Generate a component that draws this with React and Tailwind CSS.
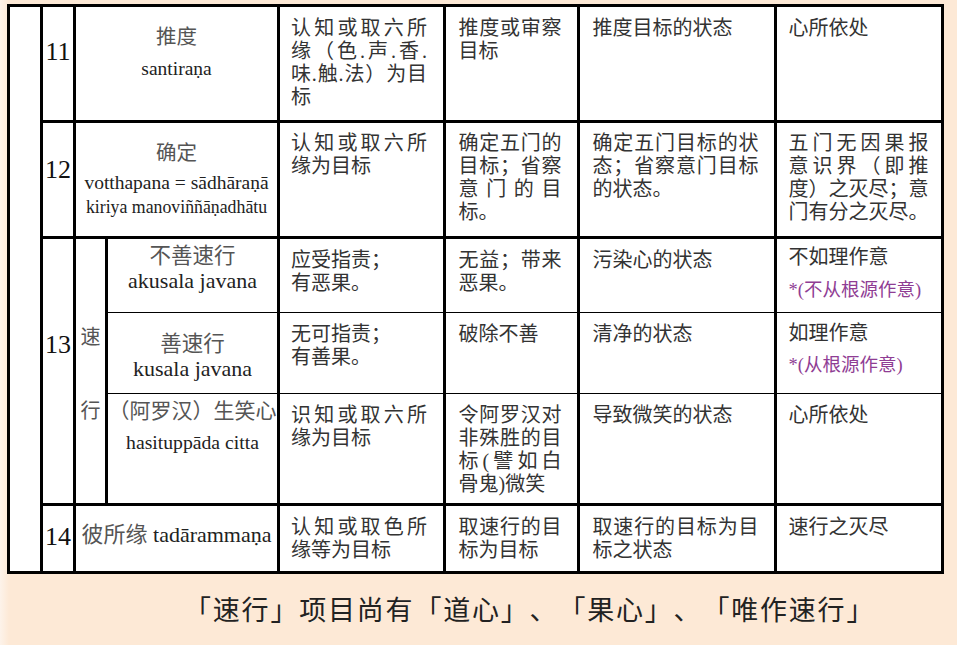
import React from 'react';

const serif = "font-['Liberation_Serif','Noto_Sans_CJK_SC',serif]";

// a line that is stretched to the full cell width (like the justified source)
const J = ({ children }) => (
  <div className="text-justify [text-align-last:justify]">{children}</div>
);
const L = ({ children }) => <div>{children}</div>;

const thick = 'border-[3px] border-black';
const dataCls = 'align-top bg-white text-[20px] leading-[23px] text-[#333]';

const c1 = 'pl-[11px] pr-[16px]';
const c2 = 'pl-[12.5px] pr-[15.5px]';
const c3 = 'pl-[12.5px] pr-[15.5px]';
const c4 = 'pl-[11.5px] pr-[12.5px]';

const Purple = ({ children, mt }) => (
  <div className={`text-[18.5px] leading-[23px] text-[#8f3d94] ${mt}`}>{children}</div>
);

const App = () => {
  return (
    <div className={`min-h-screen bg-[linear-gradient(to_right,#fdf3ea_0px,#fde9d6_9px)] pt-[4px] [text-spacing-trim:space-all] ${serif}`}>
      <table className="ml-[7px] w-[937px] table-fixed border-collapse">
        <colgroup>
          <col className="w-[33px]" />
          <col className="w-[33px]" />
          <col className="w-[32px]" />
          <col className="w-[172px]" />
          <col className="w-[166px]" />
          <col className="w-[134px]" />
          <col className="w-[197px]" />
          <col className="w-[167px]" />
        </colgroup>
        <tbody>
          {/* 11 */}
          <tr className="h-[116px]">
            <td rowSpan={6} className={`${thick} bg-white`}></td>
            <td className={`${thick} bg-white align-top pt-[30px] text-center text-[26px] leading-[30px] text-[#111]`}>11</td>
            <td colSpan={2} className={`${thick} bg-white align-top pt-[13px] text-center`}>
              <div className="text-[20.5px] leading-[34px] text-[#555]">推度</div>
              <div className="mt-[2px] text-[19.5px] leading-[26px] text-[#222]">santiraṇa</div>
            </td>
            <td className={`${thick} ${dataCls} ${c1} pt-[9.5px]`}>
              <J>认知或取六所</J>
              <J>缘（色.声.香.</J>
              <J>味.触.法）为目</J>
              <L>标</L>
            </td>
            <td className={`${thick} ${dataCls} ${c2} pt-[9.5px]`}>
              <J>推度或审察</J>
              <L>目标</L>
            </td>
            <td className={`${thick} ${dataCls} ${c3} pt-[9.5px]`}>
              <L>推度目标的状态</L>
            </td>
            <td className={`${thick} ${dataCls} ${c4} pt-[9.5px]`}>
              <L>心所依处</L>
            </td>
          </tr>

          {/* 12 */}
          <tr className="h-[116px]">
            <td className={`${thick} bg-white align-top pt-[31.5px] text-center text-[26px] leading-[30px] text-[#111]`}>12</td>
            <td colSpan={2} className={`${thick} bg-white align-top pt-[12.5px] text-center`}>
              <div className="text-[20.5px] leading-[34px] text-[#555]">确定</div>
              <div className="text-[19.5px] leading-[25px] text-[#222]">votthapana = sādhāraṇā</div>
              <div className="text-[17.8px] leading-[25px] text-[#222]">kiriya manoviññāṇadhātu</div>
            </td>
            <td className={`${thick} ${dataCls} ${c1} pt-[9px]`}>
              <J>认知或取六所</J>
              <L>缘为目标</L>
            </td>
            <td className={`${thick} ${dataCls} ${c2} pt-[9px]`}>
              <J>确定五门的</J>
              <J>目标；省察</J>
              <J>意门的目</J>
              <L>标。</L>
            </td>
            <td className={`${thick} ${dataCls} ${c3} pt-[9px]`}>
              <J>确定五门目标的状</J>
              <J>态；省察意门目标</J>
              <L>的状态。</L>
            </td>
            <td className={`${thick} ${dataCls} ${c4} pt-[9px]`}>
              <J>五门无因果报</J>
              <J>意识界（即推</J>
              <J>度）之灭尽；意</J>
              <J>门有分之灭尽。</J>
            </td>
          </tr>

          {/* 13 – akusala */}
          <tr className="h-[75px]">
            <td rowSpan={3} className={`${thick} bg-white align-top pt-[90.5px] text-center text-[26px] leading-[30px] text-[#111]`}>13</td>
            <td rowSpan={3} className={`${thick} bg-white align-top pt-[85.5px] text-center text-[20px] leading-[24px] text-[#555]`}>
              <div>速</div>
              <div className="mt-[50px]">行</div>
            </td>
            <td className={`${thick} border-b-[1px] bg-white align-top pt-[3.5px] text-center`}>
              <div className="text-[21.5px] leading-[26px] text-[#555]">不善速行</div>
              <div className="text-[22px] leading-[24px] text-[#222]">akusala javana</div>
            </td>
            <td className={`${thick} border-b-[1px] ${dataCls} ${c1} pt-[10px]`}>
              <L>应受指责；</L>
              <L>有恶果。</L>
            </td>
            <td className={`${thick} border-b-[1px] ${dataCls} ${c2} pt-[10px]`}>
              <J>无益；带来</J>
              <L>恶果。</L>
            </td>
            <td className={`${thick} border-b-[1px] ${dataCls} ${c3} pt-[10px]`}>
              <L>污染心的状态</L>
            </td>
            <td className={`${thick} border-b-[1px] ${dataCls} ${c4} pt-[7px]`}>
              <L>不如理作意</L>
              <Purple mt="mt-[10px]">*(不从根源作意)</Purple>
            </td>
          </tr>

          {/* 13 – kusala */}
          <tr className="h-[81px]">
            <td className={`${thick} border-y-[1px] bg-white align-top pt-[17.5px] text-center`}>
              <div className="text-[21.5px] leading-[26px] text-[#555]">善速行</div>
              <div className="text-[22px] leading-[24px] text-[#222]">kusala javana</div>
            </td>
            <td className={`${thick} border-y-[1px] ${dataCls} ${c1} pt-[9.5px]`}>
              <L>无可指责；</L>
              <L>有善果。</L>
            </td>
            <td className={`${thick} border-y-[1px] ${dataCls} ${c2} pt-[9.5px]`}>
              <L>破除不善</L>
            </td>
            <td className={`${thick} border-y-[1px] ${dataCls} ${c3} pt-[9.5px]`}>
              <L>清净的状态</L>
            </td>
            <td className={`${thick} border-y-[1px] ${dataCls} ${c4} pt-[9px]`}>
              <L>如理作意</L>
              <Purple mt="mt-[9px]">*(从根源作意)</Purple>
            </td>
          </tr>

          {/* 13 – hasituppāda */}
          <tr className="h-[111px]">
            <td className={`${thick} border-t-[1px] bg-white align-top pt-[1.5px] text-center`}>
              <div className="whitespace-nowrap text-[21px] leading-[30px] text-[#555]">（阿罗汉）生笑心</div>
              <div className="text-[19.7px] leading-[32px] text-[#222]">hasituppāda citta</div>
            </td>
            <td className={`${thick} border-t-[1px] ${dataCls} ${c1} pt-[9.5px]`}>
              <J>识知或取六所</J>
              <L>缘为目标</L>
            </td>
            <td className={`${thick} border-t-[1px] ${dataCls} ${c2} pt-[9.5px]`}>
              <J>令阿罗汉对</J>
              <J>非殊胜的目</J>
              <J>标(譬如白</J>
              <L>骨鬼)微笑</L>
            </td>
            <td className={`${thick} border-t-[1px] ${dataCls} ${c3} pt-[9.5px]`}>
              <L>导致微笑的状态</L>
            </td>
            <td className={`${thick} border-t-[1px] ${dataCls} ${c4} pt-[9.5px]`}>
              <L>心所依处</L>
            </td>
          </tr>

          {/* 14 */}
          <tr className="h-[68px]">
            <td className={`${thick} bg-white align-top pt-[15.5px] text-center text-[26px] leading-[30px] text-[#111]`}>14</td>
            <td colSpan={2} className={`${thick} bg-white align-top pt-[13.5px] text-center whitespace-nowrap text-[22px] leading-[30px]`}>
              <span className="text-[#555]">彼所缘</span>
              <span className="text-[#222]"> tadārammaṇa</span>
            </td>
            <td className={`${thick} ${dataCls} ${c1} pt-[9.5px]`}>
              <J>认知或取色所</J>
              <L>缘等为目标</L>
            </td>
            <td className={`${thick} ${dataCls} ${c2} pt-[9.5px]`}>
              <J>取速行的目</J>
              <L>标为目标</L>
            </td>
            <td className={`${thick} ${dataCls} ${c3} pt-[9.5px]`}>
              <J>取速行的目标为目</J>
              <L>标之状态</L>
            </td>
            <td className={`${thick} ${dataCls} ${c4} pt-[9.5px]`}>
              <L>速行之灭尽</L>
            </td>
          </tr>
        </tbody>
      </table>

      <p className="mt-[20px] pl-[184px] whitespace-nowrap text-[27px] leading-[30px] tracking-[1.8px] text-[#222] font-['Noto_Sans_CJK_SC',sans-serif]">
        「速行」项目尚有「道心」、「果心」、「唯作速行」
      </p>
    </div>
  );
};

export default App;
